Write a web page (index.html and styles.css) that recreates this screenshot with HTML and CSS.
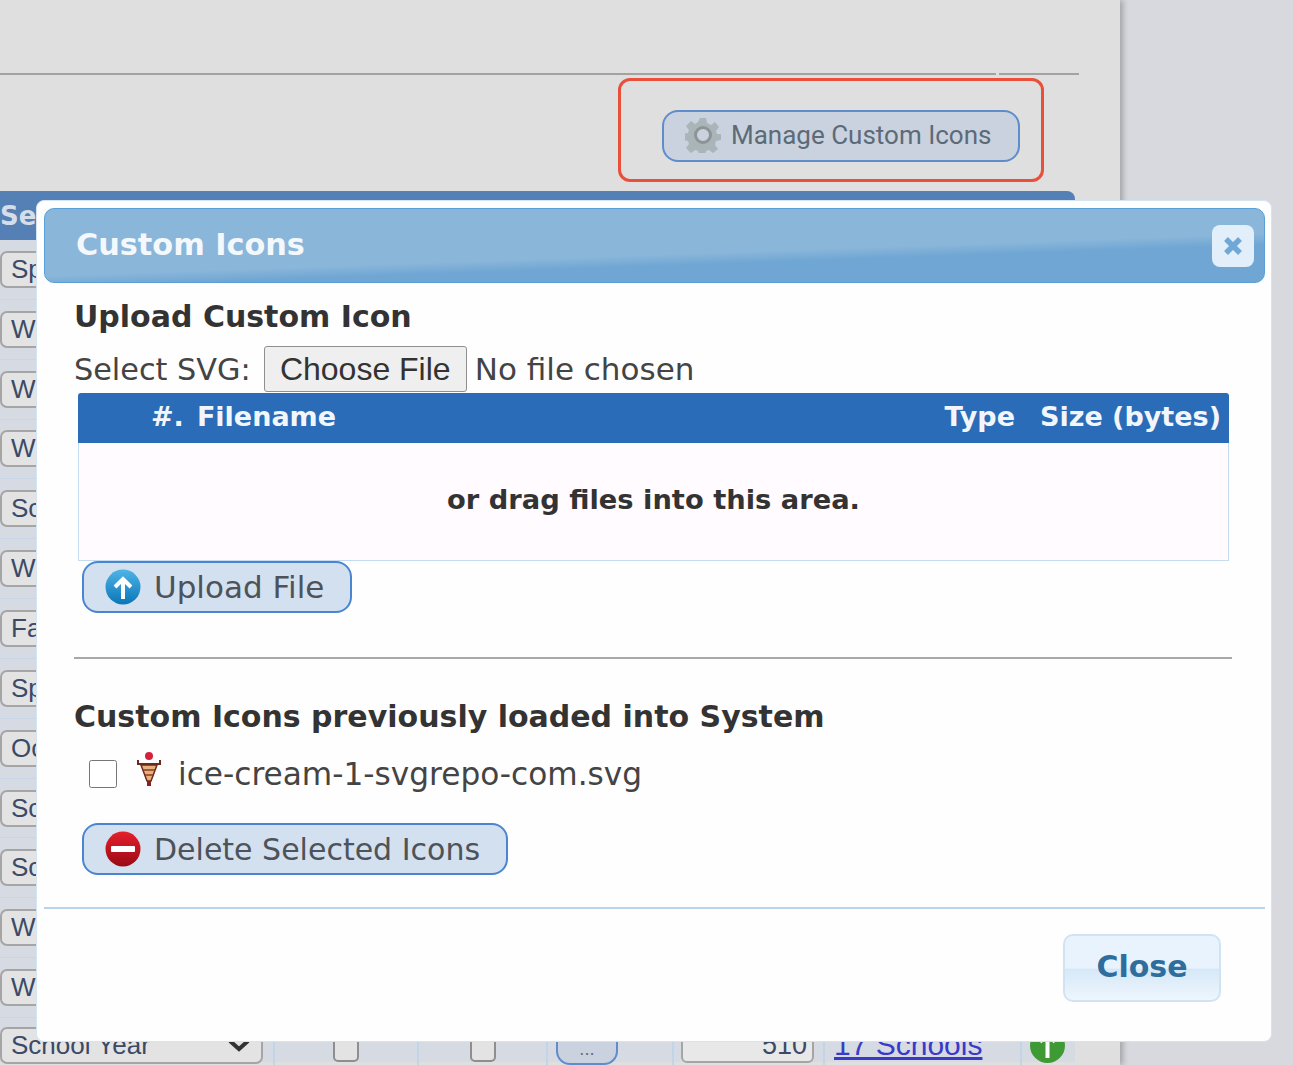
FILE: index.html
```html
<!DOCTYPE html>
<html lang="en">
<head>
  <meta charset="UTF-8" />
  <title>Custom Icons</title>
  <link rel="stylesheet" href="styles.css">
</head>
<body>
  <div class="panel">
    <div class="top-rule"><span class="rule-a"></span><span class="rule-b"></span></div>
    <div class="toolbar">
      <button class="manage-btn" type="button">
        <svg class="gear" viewBox="0 0 36 36" width="36" height="36">
          <path fill="#a9b5b8" d="M15 1h6l1 5 4 2 4-3 4 5-3 4 1 3h4v6l-5 1-1 4 3 4-5 4-4-3-3 1-1 5h-6l-1-5-3-1-4 3-5-5 3-4-1-3-5-1v-6l5-1 1-3-3-4 5-5 4 3 3-2z"/>
          <circle cx="18" cy="18" r="7.5" fill="#c9d2de" stroke="#8e9396" stroke-width="3"/>
        </svg>
        Manage Custom Icons
      </button>
    </div>
    <div class="grid-head">Sea</div>
    <div class="grid-body">
      <div class="grid-row"><div class="fake-select">Spr</div></div>
      <div class="grid-row"><div class="fake-select">Wi</div></div>
      <div class="grid-row"><div class="fake-select">Wi</div></div>
      <div class="grid-row"><div class="fake-select">Wi</div></div>
      <div class="grid-row"><div class="fake-select">Sch</div></div>
      <div class="grid-row"><div class="fake-select">Wi</div></div>
      <div class="grid-row"><div class="fake-select">Fal</div></div>
      <div class="grid-row"><div class="fake-select">Spr</div></div>
      <div class="grid-row"><div class="fake-select">Oct</div></div>
      <div class="grid-row"><div class="fake-select">Sch</div></div>
      <div class="grid-row"><div class="fake-select">Sch</div></div>
      <div class="grid-row"><div class="fake-select">Wi</div></div>
      <div class="grid-row"><div class="fake-select">Wi</div></div>
      <div class="grid-row last-row">
        <div class="fake-select year-select">School Year
          <svg class="caret" viewBox="0 0 24 14" width="24" height="14"><path d="M3 3l9 8 9-8" fill="none" stroke="#333" stroke-width="4"/></svg>
        </div>
        <div class="cell cell-check"><span class="fake-check"></span></div>
        <div class="cell cell-check2"><span class="fake-check"></span></div>
        <div class="cell cell-more"><span class="more-btn">...</span></div>
        <div class="cell cell-num"><span class="num-box">510</span></div>
        <div class="cell cell-link"><a href="#">17 Schools</a></div>
        <div class="cell cell-dot">
          <svg viewBox="0 0 35 35" width="35" height="35">
            <circle cx="17.5" cy="17.5" r="17.5" fill="#3f9a35"/>
            <path d="M17.5 30V6M10 14l7.5-8 7.5 8" fill="none" stroke="#fff" stroke-width="4"/>
          </svg>
        </div>
      </div>
    </div>
  </div>

  <div class="callout"></div>

  <div class="modal">
    <div class="modal-title">
      <span>Custom Icons</span>
      <button class="close-x" type="button">
        <svg viewBox="0 0 20 20" width="20" height="20"><path d="M3 3l14 14M17 3L3 17" stroke="#6fa8d6" stroke-width="5.5" fill="none"/></svg>
      </button>
    </div>
    <div class="modal-body">
      <h3 class="sec-title">Upload Custom Icon</h3>
      <div class="select-line">
        <label class="select-label">Select SVG:</label>
        <input class="file-input" type="file" accept=".svg">
      </div>
      <div class="upload-table">
        <div class="upload-head">
          <span class="col-num">#.</span>
          <span class="col-name">Filename</span>
          <span class="col-type">Type</span>
          <span class="col-size">Size (bytes)</span>
        </div>
        <div class="drop-area">or drag files into this area.</div>
      </div>
      <button class="action-btn upload-btn" type="button">
        <svg viewBox="0 0 36 36" width="36" height="36">
          <defs>
            <linearGradient id="blueBall" x1="0" y1="0" x2="0" y2="1"><stop offset="0" stop-color="#4fb4e6"/><stop offset="1" stop-color="#0a76b8"/></linearGradient>
            <linearGradient id="redBall" x1="0" y1="0" x2="0" y2="1"><stop offset="0" stop-color="#e4202c"/><stop offset="1" stop-color="#9a0a14"/></linearGradient>
          </defs>
          <circle cx="18" cy="18" r="17.5" fill="url(#blueBall)"/>
          <path d="M18 30V11M10 18l8-8 8 8" fill="none" stroke="#fff" stroke-width="4"/>
        </svg>
        Upload File
      </button>
      <hr class="divider">
      <h3 class="sec-title prev-title">Custom Icons previously loaded into System</h3>
      <div class="icon-row">
        <input class="icon-check" type="checkbox">
        <svg class="cream" viewBox="0 0 28 36" width="28" height="36">
          <circle cx="14" cy="5" r="4" fill="#d4213d"/>
          <path d="M2 9v5h24V9h-2v3H4V9z" fill="#6d2a1c"/>
          <path d="M6 14h16l-6 16h-4z" fill="#e4b27a" stroke="#6d2a1c" stroke-width="1.5"/>
          <path d="M8 19h12M10 24h8" stroke="#8a3d24" stroke-width="1.5"/>
          <path d="M12 30h4v5h-4z" fill="#8c1f24"/>
        </svg>
        <span class="icon-name">ice-cream-1-svgrepo-com.svg</span>
      </div>
      <button class="action-btn delete-btn" type="button">
        <svg viewBox="0 0 36 36" width="36" height="36">
          <circle cx="18" cy="18" r="17.5" fill="url(#redBall)"/>
          <rect x="6" y="15" width="24" height="6" rx="1" fill="#fff"/>
        </svg>
        Delete Selected Icons
      </button>
    </div>
    <div class="modal-foot">
      <button class="close-btn" type="button">Close</button>
    </div>
  </div>
</body>
</html>
```

FILE: styles.css
```css
html, body {
  margin: 0;
  height: 1065px;
  overflow: hidden;
}

body {
  background: #d8d9de;
  font-family: "DejaVu Sans", sans-serif;
  position: relative;
}

.panel {
  width: 1120px;
  height: 1065px;
  background: #dfdfdf;
  box-shadow: 3px 0 6px rgba(0, 0, 0, 0.25);
  overflow: hidden;
}

.top-rule {
  display: flex;
  gap: 3px;
  width: 1079px;
  padding-top: 73px;
}

.rule-a {
  width: 996px;
  height: 2px;
  background: #a2a2a2;
}

.rule-b {
  flex: 1;
  height: 2px;
  background: #a2a2a2;
}

.toolbar {
  height: 116px;
  padding: 35px 0 0 662px;
  box-sizing: border-box;
}

.manage-btn {
  width: 358px;
  height: 52px;
  display: flex;
  align-items: center;
  gap: 10px;
  padding: 0 0 2px 21px;
  background: #c9d2de;
  border: 2px solid #5f8ccb;
  border-radius: 16px;
  color: #5d6a78;
  font-family: Roboto, sans-serif;
  font-size: 26px;
}

.gear {
  flex: none;
}

.grid-head {
  width: 1075px;
  height: 49px;
  background: #5580b5;
  border-radius: 0 8px 0 0;
  color: #d5dde8;
  font-weight: bold;
  font-size: 26px;
  line-height: 50px;
  box-sizing: border-box;
}

.grid-body {
  width: 1075px;
  background: #d5dae3;
}

.grid-row {
  height: 59.85px;
  display: flex;
  align-items: center;
  border-bottom: 1px solid #c7d5e6;
  box-sizing: border-box;
}

.fake-select {
  width: 263px;
  height: 37px;
  flex: none;
  display: flex;
  align-items: center;
  justify-content: space-between;
  padding: 0 10px 0 9px;
  box-sizing: border-box;
  background: #e3e3e3;
  border: 2px solid #a5a5a5;
  border-radius: 7px;
  color: #3b4a66;
  font-family: "Liberation Sans", sans-serif;
  font-size: 26px;
}

.last-row {
  align-items: flex-start;
  height: 44px;
  padding-top: 3px;
  border-bottom: none;
}

.year-select {
  margin-top: 6px;
}

.cell {
  height: 44px;
  border-left: 2px solid #c2d4e8;
  box-sizing: border-box;
  display: flex;
  flex: none;
}

.cell-check { width: 144px; margin-left: 10px; justify-content: center; padding-top: 15px; }
.cell-check2 { width: 129px; justify-content: center; padding-top: 15px; }
.cell-more { width: 126px; padding: 0 0 0 8px; }
.cell-num { width: 151px; padding: 8px 0 0 7px; }
.cell-link { width: 197px; padding: 7px 0 0 9px; }
.cell-dot { width: 55px; padding: 7px 0 0 8px; }

.fake-check {
  width: 26px;
  height: 26px;
  box-sizing: border-box;
  background: #e3e3e3;
  border: 2px solid #8e8e8e;
  border-radius: 5px;
}

.more-btn {
  width: 62px;
  height: 44px;
  box-sizing: border-box;
  background: #c9d2de;
  border: 2px solid #5f8ccb;
  border-radius: 14px;
  color: #5d6a78;
  font-size: 16px;
  text-align: center;
  line-height: 54px;
}

.num-box {
  width: 133px;
  height: 34px;
  box-sizing: border-box;
  padding-right: 5px;
  background: #e8e8e8;
  border: 2px solid #a5a5a5;
  border-radius: 6px;
  color: #3b4a66;
  font-family: "Liberation Sans", sans-serif;
  font-size: 27px;
  line-height: 28px;
  text-align: right;
}

.cell-link a {
  color: #3a3ac8;
  font-family: "Liberation Sans", sans-serif;
  font-size: 30px;
  line-height: 34px;
}

.callout {
  position: absolute;
  left: 618px;
  top: 78px;
  width: 426px;
  height: 104px;
  box-sizing: border-box;
  border: 3px solid #e8503a;
  border-radius: 12px;
}

.modal {
  position: absolute;
  left: 36px;
  top: 200px;
  width: 1236px;
  height: 842px;
  box-sizing: border-box;
  padding: 7px 6px 0 7px;
  background: #fefefe;
  border: 1px solid #d3e4f3;
  border-radius: 8px;
  display: flex;
  flex-direction: column;
}

.modal-title {
  height: 75px;
  flex: none;
  box-sizing: border-box;
  display: flex;
  align-items: center;
  justify-content: space-between;
  padding: 0 10px 2px 31px;
  background: linear-gradient(178deg, #8ab6da 0 58%, #6fa6d3 68%, #6fa6d3 100%);
  border: 1px solid #58a0d6;
  border-radius: 10px;
  color: #f4f8fc;
  font-size: 30.3px;
  font-weight: bold;
}

.close-x {
  width: 42px;
  height: 42px;
  padding: 0;
  margin-top: 2px;
  display: flex;
  align-items: center;
  justify-content: center;
  background: #e2eefa;
  border: none;
  border-radius: 8px;
}

.modal-body {
  flex: 1;
  padding: 0 33px 0 30px;
}

.sec-title {
  margin: 16px 0 0;
  color: #333;
  font-size: 30px;
  font-weight: bold;
  line-height: 36px;
}

.select-line {
  display: flex;
  align-items: center;
  gap: 13px;
  height: 46px;
  margin-top: 11px;
  color: #444;
  font-size: 30.3px;
}

.file-input {
  color: #444;
  font-family: "DejaVu Sans", sans-serif;
  font-size: 31px;
  width: 500px;
}

.file-input::file-selector-button {
  height: 46px;
  width: 203px;
  margin-right: 8px;
  background: #efefef;
  border: 1px solid #8f8f8f;
  border-radius: 3px;
  color: #333;
  font-family: "Liberation Sans", sans-serif;
  font-size: 32px;
}

.upload-table {
  margin: 1px 3px 0 4px;
}

.upload-head {
  height: 50px;
  box-sizing: border-box;
  padding-bottom: 4px;
  display: flex;
  align-items: center;
  background: #2b6cb8;
  border-radius: 3px 3px 0 0;
  color: #f2f6fb;
  font-size: 27px;
  font-weight: bold;
}

.col-num { margin-left: 73px; }
.col-name { margin-left: 13px; flex: 1; }
.col-type { margin-right: 25px; }
.col-size { margin-right: 8px; }

.drop-area {
  height: 118px;
  box-sizing: border-box;
  background: #fffbff;
  border: 1px solid #c5dbf0;
  border-top: none;
  color: #333;
  font-size: 27.3px;
  font-weight: bold;
  line-height: 114px;
  text-align: center;
}

.action-btn {
  display: flex;
  align-items: center;
  gap: 13px;
  height: 52px;
  margin-left: 8px;
  padding: 0 0 0 21px;
  background: #d3e0f0;
  border: 2px solid #4a86d0;
  border-radius: 16px;
  color: #4d5358;
  font-family: "DejaVu Sans", sans-serif;
  font-size: 31px;
}

.upload-btn { width: 270px; }
.delete-btn { width: 426px; margin-top: 25px; font-size: 30px; }

.divider {
  margin: 44px 0 0;
  border: none;
  border-top: 2px solid #a8a8a8;
}

.prev-title {
  margin-top: 40px;
}

.icon-row {
  display: flex;
  align-items: center;
  height: 48px;
  margin-top: 15px;
}

.icon-check {
  width: 28px;
  height: 28px;
  margin: 0 18px 0 15px;
}

.cream {
  margin-top: -10px;
}

.icon-name {
  margin-left: 15px;
  color: #444;
  font-size: 31.2px;
}

.modal-foot {
  height: 134px;
  flex: none;
  box-sizing: border-box;
  display: flex;
  justify-content: flex-end;
  padding: 25px 44px 0 0;
  border-top: 2px solid #b9d4ea;
}

.close-btn {
  width: 158px;
  height: 68px;
  padding: 0 0 4px;
  background: linear-gradient(#e9f3fd 0 50%, #d6e8f8 52%, #eef6fd 100%);
  border: 2px solid #d1e3f3;
  border-radius: 10px;
  color: #2e6e9e;
  font-family: "DejaVu Sans", sans-serif;
  font-size: 30px;
  font-weight: bold;
}
```
